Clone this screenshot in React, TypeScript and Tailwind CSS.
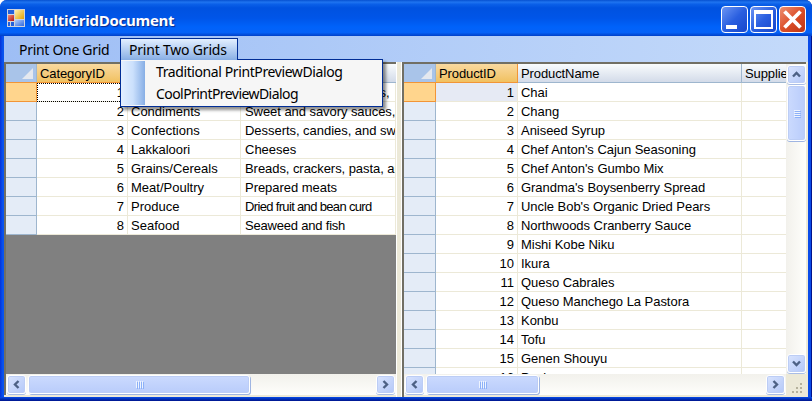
import React from 'react';

type Dir = 'left' | 'right' | 'up' | 'down';

const categories: [number, string, string, string][] = [
  [1, '', 'Soft drinks, coffees, teas,', 'tracking-[-0.04px]'],
  [2, 'Condiments', 'Sweet and savory sauces,', 'tracking-[-0.06px]'],
  [3, 'Confections', 'Desserts, candies, and sweet', 'tracking-[-0.04px]'],
  [4, 'Lakkaloori', 'Cheeses', 'tracking-normal'],
  [5, 'Grains/Cereals', 'Breads, crackers, pasta, and', 'tracking-[-0.06px]'],
  [6, 'Meat/Poultry', 'Prepared meats', 'tracking-[-0.04px]'],
  [7, 'Produce', 'Dried fruit and bean curd', 'tracking-[-0.66px]'],
  [8, 'Seafood', 'Seaweed and fish', 'tracking-[-0.2px]'],
];

const products = [
  'Chai',
  'Chang',
  'Aniseed Syrup',
  "Chef Anton's Cajun Seasoning",
  "Chef Anton's Gumbo Mix",
  "Grandma's Boysenberry Spread",
  "Uncle Bob's Organic Dried Pears",
  'Northwoods Cranberry Sauce',
  'Mishi Kobe Niku',
  'Ikura',
  'Queso Cabrales',
  'Queso Manchego La Pastora',
  'Konbu',
  'Tofu',
  'Genen Shouyu',
  'Pavlova',
];

const chevrons: Record<Dir, string> = {
  left: 'M8.5 3 L5 6.5 L8.5 10',
  right: 'M4.5 3 L8 6.5 L4.5 10',
  up: 'M3 8.5 L6.5 5 L10 8.5',
  down: 'M3 4.5 L6.5 8 L10 4.5',
};

function ArrowButton({ dir }: { dir: Dir }) {
  return (
    <div className="flex h-[19px] w-[19px] shrink-0 items-center justify-center rounded-[3px] border border-white bg-linear-to-br from-[#d9e4fe] to-[#b4c8f8] shadow-[inset_0_0_0_1px_#bccdf5,0_1px_0_#a9bde6]">
      <svg width="13" height="13" viewBox="0 0 13 13">
        <path d={chevrons[dir]} fill="none" stroke="#4d6185" strokeWidth="2.4" />
      </svg>
    </div>
  );
}

function HScroll({ thumb }: { thumb: string }) {
  return (
    <div className="flex h-[21px] w-full shrink-0 items-start bg-linear-to-b from-[#f2f1ec] to-[#fefefb] pt-px pl-px">
      <ArrowButton dir="left" />
      <div
        className={`ml-[2px] flex h-[19px] items-center justify-center gap-px rounded-[3px] border border-white bg-linear-to-b from-[#cbdafe] to-[#b9ccfb] shadow-[inset_0_0_0_1px_#bccdf5,1px_1px_0_#9fb5e2] ${thumb}`}
      >
        {[0, 1, 2, 3].map((i) => (
          <div key={i} className="h-[7px] w-px bg-[#eef4fe] shadow-[1px_1px_0_#8cb0f8]" />
        ))}
      </div>
      <div className="ml-auto pr-px">
        <ArrowButton dir="right" />
      </div>
    </div>
  );
}

function VScroll() {
  return (
    <div className="flex w-[20px] shrink-0 flex-col items-start bg-linear-to-r from-[#f2f1ec] to-[#fefefb] pt-px pb-px pl-px">
      <ArrowButton dir="up" />
      <div className="mt-px flex h-[56px] w-[19px] flex-col items-center justify-center gap-px rounded-[3px] border border-white bg-linear-to-r from-[#cbdafe] to-[#b9ccfb] shadow-[inset_0_0_0_1px_#bccdf5,0_1px_0_#9fb5e2]">
        {[0, 1, 2, 3].map((i) => (
          <div key={i} className="h-px w-[6px] bg-[#eef4fe] shadow-[1px_1px_0_#8cb0f8]" />
        ))}
      </div>
      <div className="mt-auto">
        <ArrowButton dir="down" />
      </div>
    </div>
  );
}

function Corner({ w }: { w: string }) {
  return (
    <div className={`flex h-[19px] shrink-0 items-end justify-end border-r border-b border-[#9eb6ce] bg-[#a9c4e9] pr-[3px] pb-[3px] ${w}`}>
      <svg width="11" height="11" viewBox="0 0 11 11">
        <path d="M11 0 V11 H0 Z" fill="#e4e8ef" />
      </svg>
    </div>
  );
}

function Head({ w, active, children }: { w: string; active?: boolean; children?: React.ReactNode }) {
  const tone = active
    ? 'bg-linear-to-b from-[#f9d99f] to-[#f1c15f] border-[#f29536]'
    : 'bg-linear-to-b from-[#f9fcfd] to-[#d3dbe9] border-[#9eb6ce]';
  return <div className={`h-[19px] shrink-0 overflow-hidden border-r border-b pl-[3px] leading-[20px] ${tone} ${w}`}>{children}</div>;
}

function RowHead({ active, w }: { active?: boolean; w: string }) {
  return (
    <div
      className={`h-[19px] shrink-0 border-r border-b ${w} ${
        active ? 'border-[#f29536] bg-[#ffd58d] shadow-[0_-1px_0_#f29536]' : 'border-[#9eb6ce] bg-[#e4ecf7]'
      }`}
    />
  );
}

const cell = 'h-[19px] shrink-0 overflow-hidden border-r border-b border-[#ece9d8] leading-[20px]';

function WindowButton({ kind }: { kind: 'min' | 'max' | 'close' }) {
  const tone =
    kind === 'close'
      ? 'bg-linear-to-br from-[#ec8e70] via-[#dc4f29] to-[#bd3412]'
      : 'bg-linear-to-br from-[#6c94f3] via-[#2a5fe0] to-[#1746cb]';
  return (
    <div className={`h-[27px] w-[27px] rounded-[4px] border border-white ${tone}`}>
      <svg width="25" height="25" viewBox="0 0 25 25">
        {kind === 'min' && <rect x="4" y="18" width="11" height="4" fill="#fff" />}
        {kind === 'max' && <path d="M3 3H22V22H3Z M5 7V20H20V7Z" fill="#fff" fillRule="evenodd" />}
        {kind === 'close' && <path d="M4.5 4.5 L20.5 20.5 M20.5 4.5 L4.5 20.5" stroke="#fff" strokeWidth="3.8" />}
      </svg>
    </div>
  );
}

function AppIcon() {
  return (
    <svg width="18" height="18" viewBox="0 0 18 18">
      <defs>
        <linearGradient id="gold" x1="0" y1="0" x2="1" y2="1">
          <stop offset="0" stopColor="#fdf0b0" />
          <stop offset="1" stopColor="#e5a200" />
        </linearGradient>
        <linearGradient id="brick" x1="0" y1="0" x2="1" y2="1">
          <stop offset="0" stopColor="#f08a78" />
          <stop offset="1" stopColor="#b81410" />
        </linearGradient>
        <linearGradient id="sky" x1="0" y1="0" x2="1" y2="1">
          <stop offset="0" stopColor="#b4cef8" />
          <stop offset="1" stopColor="#2f68e0" />
        </linearGradient>
      </defs>
      <rect width="18" height="18" fill="#cfd3dc" />
      <rect x="1" y="1" width="6" height="4" fill="#2260dc" />
      <rect x="1" y="6" width="6" height="6" fill="url(#brick)" />
      <rect x="8" y="1" width="9" height="9" fill="url(#gold)" />
      <rect x="8" y="11" width="9" height="6" fill="url(#sky)" />
      <rect x="1" y="13" width="2" height="4" fill="#2260dc" />
      <rect x="4" y="13" width="3" height="4" fill="#2260dc" />
    </svg>
  );
}

export default function App() {
  return (
    <div className="h-[401px] w-[812px] overflow-hidden bg-white">
      <div className="flex h-[401px] w-[812px] flex-col overflow-hidden rounded-t-[7px] bg-linear-to-r from-[#0831d9] from-[0px] via-[#0a55f0] via-[3px] to-[#0a4be8] to-[6px] whitespace-nowrap text-black shadow-[inset_-1px_0_0_#00138c]">
        <div className="flex h-[36px] shrink-0 items-center bg-[linear-gradient(to_bottom,#0650d0_0%,#1f74f0_6%,#0a5fe8_12%,#0052e0_22%,#0055e8_50%,#0062fa_75%,#0562f8_90%,#0040c8_100%)] pr-[6px] pl-[7px]">
          <AppIcon />
          <div className="ml-[5px] pt-[4px] font-['Open_Sans',sans-serif] text-[15px] leading-[20px] font-bold tracking-[-0.3px] text-white [text-shadow:1px_1px_1px_#0a2a8c]">
            MultiGridDocument
          </div>
          <div className="ml-auto flex gap-[2px] pt-[3px]">
            <WindowButton kind="min" />
            <WindowButton kind="max" />
            <WindowButton kind="close" />
          </div>
        </div>

        <div className="mr-[4px] ml-[4px] flex min-h-0 flex-1 flex-col bg-[#ece9d8]">
          <div className="relative flex h-[26px] shrink-0 items-start bg-linear-to-r from-[#9ebef5] to-[#c4dafa] pt-[2px] font-['Noto_Sans',sans-serif] text-[14px]">
            <div className="w-[116px] pl-[15px] leading-[23px] tracking-[-0.3px]">Print One Grid</div>
            <div className="h-[22px] w-[118px] border border-b-0 border-[#002d96] bg-linear-to-b from-[#e3efff] to-[#89afe5] pl-[8px] leading-[22px] tracking-[-0.2px]">
              Print Two Grids
            </div>
            <div className="absolute top-[23px] left-[116px] z-10 flex h-[48px] w-[263px] border border-[#002d96] bg-[#f6f6f6] py-px shadow-[3px_3px_3px_rgba(0,0,0,0.45)]">
              <div className="absolute -top-px left-0 h-px w-[116px] bg-[#89afe5]" />
              <div className="w-[24px] bg-linear-to-r from-[#e3efff] via-[#cbe0fc] to-[#87aee5]" />
              <div className="pl-[11px] leading-[22px] tracking-[-0.4px]">
                <div>Traditional PrintPreviewDialog</div>
                <div className="tracking-[-0.56px]">CoolPrintPreviewDialog</div>
              </div>
            </div>
          </div>

          <div className="flex min-h-0 flex-1 font-['Liberation_Sans',sans-serif] text-[13px]">
            <div className="flex w-[392px] flex-col pb-[2px]">
              <div className="flex min-h-0 flex-1 flex-col overflow-hidden border-t-2 border-l-2 border-[#716f64] bg-[#808080]">
                <div className="flex tracking-[-0.1px]">
                  <Corner w="w-[31px]" />
                  <Head w="w-[91px]" active>CategoryID</Head>
                  <Head w="w-[113px]" />
                  <Head w="w-[170px]" />
                </div>
                {categories.map(([id, name, desc, tracking]) => (
                  <div key={id} className="flex bg-white">
                    <RowHead w="w-[31px]" active={id === 1} />
                    <div className={`w-[91px] pr-[3px] text-right ${cell} ${id === 1 ? 'outline-1 -outline-offset-1 outline-dotted outline-black' : ''}`}>{id}</div>
                    <div className={`w-[113px] pl-[3px] ${cell}`}>{name}</div>
                    <div className={`w-[155px] pl-[4px] ${tracking} ${cell}`}>{desc}</div>
                  </div>
                ))}
              </div>
              <div className="border-l-2 border-[#716f64]">
                <HScroll thumb="w-[222px]" />
              </div>
            </div>
            <div className="w-[6px] border-x border-white bg-[#ece9d8]" />
            <div className="flex w-[404px] flex-col border-t-2 border-l-2 border-[#716f64] pb-[2px]">
              <div className="flex min-h-0 flex-1">
                <div className="min-w-0 flex-1 overflow-hidden bg-white">
                  <div className="flex tracking-[-0.1px]">
                    <Corner w="w-[32px]" />
                    <Head w="w-[82px]" active>ProductID</Head>
                    <Head w="w-[224px]">ProductName</Head>
                    <Head w="w-[80px]">SupplierID</Head>
                  </div>
                  {products.map((name, i) => (
                    <div key={name} className="flex">
                      <RowHead w="w-[32px]" active={i === 0} />
                      <div className={`w-[82px] pr-[3px] text-right ${cell} ${i === 0 ? 'bg-[#e6eaf4]' : ''}`}>{i + 1}</div>
                      <div className={`w-[224px] pl-[3px] tracking-[-0.04px] ${cell}`}>{name}</div>
                      <div className={`w-[80px] ${cell}`} />
                    </div>
                  ))}
                </div>
                <VScroll />
              </div>
              <div className="flex">
                <div className="min-w-0 flex-1">
                  <HScroll thumb="w-[113px]" />
                </div>
                <svg width="20" height="21" viewBox="0 0 20 21" className="shrink-0">
                  <path d="M14 9h2v2h-2z M10 13h2v2h-2z M14 13h2v2h-2z M6 17h2v2h-2z M10 17h2v2h-2z M14 17h2v2h-2z" fill="#b5b19c" />
                </svg>
              </div>
            </div>
          </div>
        </div>
        <div className="h-[4px] shrink-0 bg-linear-to-b from-[#0a4be8] to-[#00138c]" />
      </div>
    </div>
  );
}
